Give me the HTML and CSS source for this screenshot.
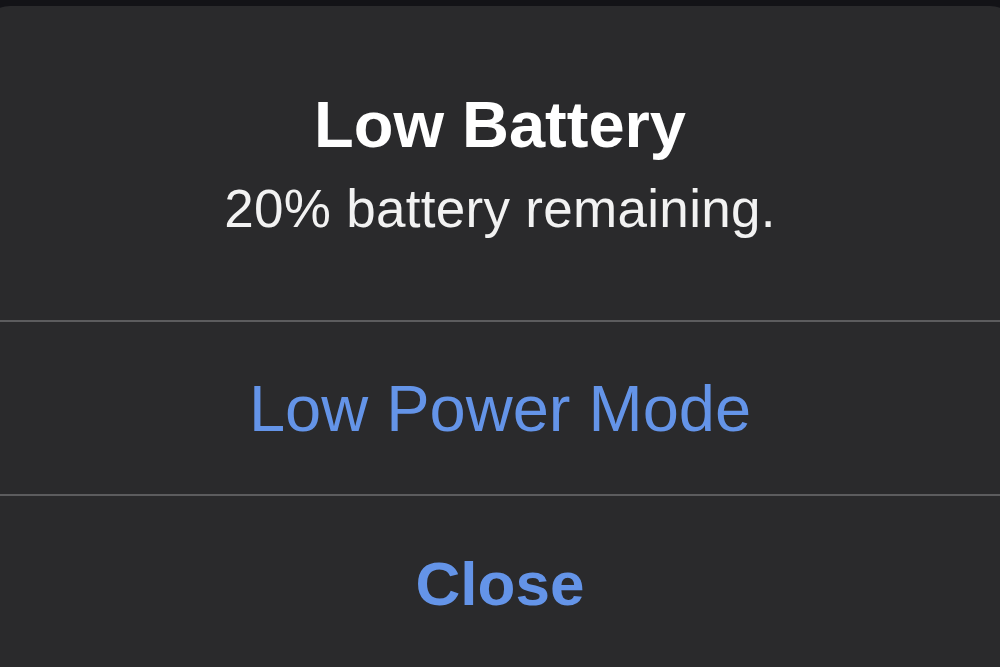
FILE: index.html
```html
<!DOCTYPE html>
<html lang="en">
<head>
<meta charset="utf-8">
<title>Low Battery</title>
<link rel="stylesheet" href="styles.css">
</head>
<body>
<div class="alert">
  <div class="alert-header">
    <div class="alert-title">Low Battery</div>
    <div class="alert-message">20% battery remaining.</div>
  </div>
  <div class="alert-action">Low Power Mode</div>
  <div class="alert-action alert-action--bold">Close</div>
</div>
</body>
</html>
```

FILE: styles.css
```css
html, body {
  margin: 0;
  padding: 0;
  height: 100%;
  overflow: hidden;
}

body {
  background: #131317;
  font-family: "Liberation Sans", Arial, sans-serif;
}

.alert {
  margin: 6px -20px 0;
  background: #2a2a2c;
  border-radius: 30px 30px 0 0;
  height: 661px;
  overflow: hidden;
  display: flex;
  flex-direction: column;
  text-align: center;
}

.alert-header {
  padding: 86px 0 85px;
  border-bottom: 2px solid #5c5c5e;
  display: flex;
  flex-direction: column;
  gap: 25px;
}

.alert-title {
  color: #ffffff;
  font-weight: 700;
  font-size: 65px;
  line-height: 65px;
}

.alert-message {
  color: #f2f2f2;
  font-size: 53px;
  line-height: 53px;
  letter-spacing: 0.3px;
}

.alert-action {
  color: #6494e8;
  font-size: 65px;
  line-height: 65px;
  height: 172px;
  display: flex;
  align-items: center;
  justify-content: center;
  border-bottom: 2px solid #5c5c5e;
}

.alert-action--bold {
  flex: 1;
  font-weight: 700;
  font-size: 62px;
  line-height: 62px;
  height: auto;
  align-items: flex-start;
  padding-top: 57px;
  border-bottom: none;
}
```
